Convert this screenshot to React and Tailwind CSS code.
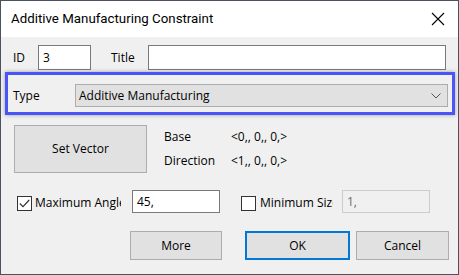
import React from 'react';

function CloseIcon() {
  return (
    <svg width="14" height="14" viewBox="0 0 14 14" className="block">
      <path d="M1 1 L13 13 M13 1 L1 13" stroke="#000" strokeWidth="1.1" fill="none" />
    </svg>
  );
}

function Chevron() {
  return (
    <svg width="10" height="6" viewBox="0 0 10 6" className="block">
      <path d="M0.5 0.5 L5 5 L9.5 0.5" stroke="#555" strokeWidth="1" fill="none" />
    </svg>
  );
}

function Checkbox({ checked }) {
  return (
    <div className="w-[15px] h-[15px] border border-[#333] bg-white flex items-center justify-center shrink-0">
      {checked && (
        <svg width="11" height="9" viewBox="0 0 11 9" className="block">
          <path d="M0.8 4.5 L4 7.6 L10.2 1" stroke="#333" strokeWidth="1.2" fill="none" />
        </svg>
      )}
    </div>
  );
}

export default function App() {
  return (
    <div className="w-[459px] h-[275px] border border-[#4b5160] bg-[#f0f0f0] flex flex-col font-['Open_Sans',sans-serif] text-[12px] text-black overflow-hidden">
      {/* Title bar */}
      <div className="h-[36px] bg-white flex items-center justify-between pl-[10px] pr-[13px]">
        <span className="font-['Roboto',sans-serif] text-[13.3px] leading-none">Additive Manufacturing Constraint</span>
        <CloseIcon />
      </div>

      {/* ID / Title */}
      <div className="mt-[8px] flex items-center h-[25px] pl-[12px]">
        <span className="w-[25px]">ID</span>
        <div className="w-[53px] h-[25px] border border-[#7a7a7a] bg-white flex items-center px-[4px]">3</div>
        <span className="ml-[20px] w-[37px]">Title</span>
        <div className="w-[298px] h-[25px] border border-[#7a7a7a] bg-white" />
      </div>

      {/* Type group */}
      <div className="mt-[2px] ml-[4px] w-[450px] h-[43px] border-[3px] border-[#4a55f7] shadow-[0_0_4px_rgba(0,0,0,0.35)] flex items-start pt-[9px] pl-[5px]">
        <span className="w-[62px] h-[23px] flex items-center">Type</span>
        <div className="w-[373px] h-[23px] border border-[#adadad] bg-[#e1e1e1] flex items-center justify-between pl-[3px] pr-[6px]">
          <span>Additive Manufacturing</span>
          <Chevron />
        </div>
      </div>

      {/* Set Vector */}
      <div className="mt-[10px] ml-[13px] flex">
        <div className="w-[133px] h-[48px] border border-[#adadad] bg-[#e1e1e1] flex items-center justify-center">Set Vector</div>
        <div className="ml-[17px] flex flex-col">
          <div className="h-[24px] flex items-center">
            <span className="w-[67px]">Base</span>
            <span>&lt;0,, 0,, 0,&gt;</span>
          </div>
          <div className="h-[24px] flex items-center">
            <span className="w-[67px]">Direction</span>
            <span>&lt;1,, 0,, 0,&gt;</span>
          </div>
        </div>
      </div>

      {/* Limits */}
      <div className="mt-[17px] ml-[16px] flex items-end h-[23px]">
        <div className="flex items-center w-[104px] overflow-hidden mb-[1px]">
          <Checkbox checked />
          <span className="ml-[3px] whitespace-nowrap">Maximum Angle</span>
        </div>
        <div className="ml-[11px] w-[88px] h-[23px] border border-[#7a7a7a] bg-white flex items-center px-[4px]">45,</div>
        <div className="ml-[21px] flex items-center w-[92px] overflow-hidden mb-[1px]">
          <Checkbox />
          <span className="ml-[4px] whitespace-nowrap">Minimum Size</span>
        </div>
        <div className="ml-[9px] w-[88px] h-[23px] border border-[#cccccc] bg-[#f0f0f0] text-[#6d6d6d] flex items-center px-[4px]">1,</div>
      </div>

      {/* Buttons */}
      <div className="mt-[18px] ml-[129px] flex">
        <div className="w-[92px] h-[29px] border border-[#adadad] bg-[#e1e1e1] flex items-center justify-center">More</div>
        <div className="ml-[23px] w-[105px] h-[29px] border-2 border-[#0078d7] bg-[#e1e1e1] flex items-center justify-center">OK</div>
        <div className="ml-[6px] w-[93px] h-[29px] border border-[#adadad] bg-[#e1e1e1] flex items-center justify-center">Cancel</div>
      </div>
    </div>
  );
}
